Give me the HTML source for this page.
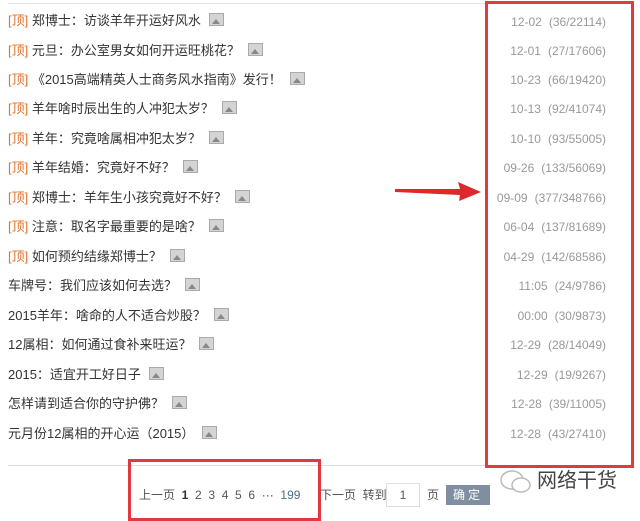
<!DOCTYPE html>
<html><head><meta charset="utf-8"><style>
body{margin:0;width:640px;height:513px;background:#fff;position:relative;overflow:hidden;font-family:"Liberation Sans","Noto Sans CJK SC",sans-serif;}
.row{position:absolute;left:8px;font-size:13px;color:#333;line-height:16px;white-space:nowrap}
.row b{font-weight:normal;color:#e0702a}
.ic{display:inline-block;width:13px;height:11px;border:1px solid #aaa;background:#d4d4d4;margin-left:8px;vertical-align:-1px;position:relative}
.ic:after{content:"";position:absolute;left:2px;bottom:1px;border-left:4px solid transparent;border-right:4px solid transparent;border-bottom:5px solid #888}
.d{position:absolute;right:34px;font-size:12px;color:#999;line-height:16px;white-space:nowrap}
.d span{margin-left:7px}
.box{position:absolute;border:3px solid #e03a3e}
</style></head><body>
<div style="position:absolute;left:8px;top:3px;width:615px;height:1px;background:#e5e5e5"></div>
<div style="position:absolute;left:8px;top:465px;width:615px;height:1px;background:#ddd"></div>

<div class="row" style="top:13px"><b>[顶]</b> 郑博士：访谈羊年开运好风水<i class="ic"></i></div>
<div class="row" style="top:43px"><b>[顶]</b> 元旦：办公室男女如何开运旺桃花？<i class="ic"></i></div>
<div class="row" style="top:72px"><b>[顶]</b> 《2015高端精英人士商务风水指南》发行！<i class="ic"></i></div>
<div class="row" style="top:101px"><b>[顶]</b> 羊年啥时辰出生的人冲犯太岁？<i class="ic"></i></div>
<div class="row" style="top:131px"><b>[顶]</b> 羊年：究竟啥属相冲犯太岁？<i class="ic"></i></div>
<div class="row" style="top:160px"><b>[顶]</b> 羊年结婚：究竟好不好？<i class="ic"></i></div>
<div class="row" style="top:190px"><b>[顶]</b> 郑博士：羊年生小孩究竟好不好？<i class="ic"></i></div>
<div class="row" style="top:219px"><b>[顶]</b> 注意：取名字最重要的是啥？<i class="ic"></i></div>
<div class="row" style="top:249px"><b>[顶]</b> 如何预约结缘郑博士？<i class="ic"></i></div>
<div class="row" style="top:278px">车牌号：我们应该如何去选？<i class="ic"></i></div>
<div class="row" style="top:308px">2015羊年：啥命的人不适合炒股？<i class="ic"></i></div>
<div class="row" style="top:337px">12属相：如何通过食补来旺运？<i class="ic"></i></div>
<div class="row" style="top:367px">2015：适宜开工好日子<i class="ic"></i></div>
<div class="row" style="top:396px">怎样请到适合你的守护佛？<i class="ic"></i></div>
<div class="row" style="top:426px">元月份12属相的开心运（2015）<i class="ic"></i></div>

<div class="d" style="top:14px">12-02<span>(36/22114)</span></div>
<div class="d" style="top:43px">12-01<span>(27/17606)</span></div>
<div class="d" style="top:72px">10-23<span>(66/19420)</span></div>
<div class="d" style="top:101px">10-13<span>(92/41074)</span></div>
<div class="d" style="top:131px">10-10<span>(93/55005)</span></div>
<div class="d" style="top:160px">09-26<span>(133/56069)</span></div>
<div class="d" style="top:190px">09-09<span>(377/348766)</span></div>
<div class="d" style="top:219px">06-04<span>(137/81689)</span></div>
<div class="d" style="top:249px">04-29<span>(142/68586)</span></div>
<div class="d" style="top:278px">11:05<span>(24/9786)</span></div>
<div class="d" style="top:308px">00:00<span>(30/9873)</span></div>
<div class="d" style="top:337px">12-29<span>(28/14049)</span></div>
<div class="d" style="top:367px">12-29<span>(19/9267)</span></div>
<div class="d" style="top:396px">12-28<span>(39/11005)</span></div>
<div class="d" style="top:426px">12-28<span>(43/27410)</span></div>

<div class="box" style="left:485px;top:1px;width:143px;height:461px"></div>
<div class="box" style="left:128px;top:459px;width:187px;height:56px"></div>

<svg style="position:absolute;left:0;top:0" width="640" height="513">
<polygon points="395,189 460,189 458,182 481,192 459,201 460,195 395,192" fill="#e0282c"/>
</svg>

<div style="position:absolute;left:139px;top:487px;font-size:12px;color:#555;white-space:nowrap;line-height:16px">上一页 &nbsp;<b style="color:#333">1</b>&nbsp; 2&nbsp; 3&nbsp; 4&nbsp; 5&nbsp; 6&nbsp; <span style="color:#333">···</span>&nbsp; <span style="color:#4a6e8a">199</span></div>
<div style="position:absolute;left:320px;top:487px;font-size:12px;color:#555;white-space:nowrap;line-height:16px">下一页 &nbsp;转到</div>
<div style="position:absolute;left:386px;top:483px;width:32px;height:22px;border:1px solid #ddd;font-size:12px;color:#555;text-align:center;line-height:22px">1</div>
<div style="position:absolute;left:427px;top:487px;font-size:12px;color:#555;line-height:16px">页</div>
<div style="position:absolute;left:446px;top:485px;width:44px;height:20px;background:#7f8ea0;color:#fff;font-size:12px;text-align:center;line-height:20px;letter-spacing:3px">确定</div>

<svg style="position:absolute;left:498px;top:468px" width="36" height="28"><ellipse cx="14" cy="12" rx="11" ry="9" fill="none" stroke="#bbb" stroke-width="1.5"/><ellipse cx="23" cy="17" rx="9" ry="7" fill="#fff" stroke="#bbb" stroke-width="1.5"/></svg>
<div style="position:absolute;left:537px;top:468px;font-size:20px;color:#444;line-height:26px;white-space:nowrap">网络干货</div>
</body></html>
